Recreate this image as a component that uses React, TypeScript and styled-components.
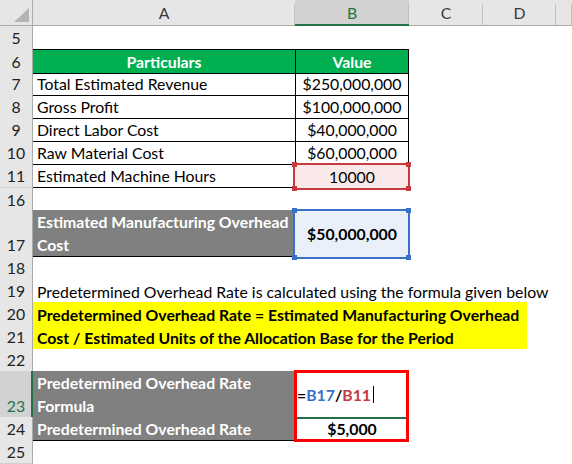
import React from "react";
import styled, { createGlobalStyle } from "styled-components";

const COLS = "33px 262px 114px 74px 73px 16px";
const FONT = `Lato, "Open Sans", "Liberation Sans", sans-serif`;
const FS = "15.8px";

const Global = createGlobalStyle`
  html, body { margin: 0; padding: 0; background: #ffffff; }
  body { font-family: ${FONT}; font-size: ${FS}; color: #000; }
  * { box-sizing: border-box; }
`;

const Sheet = styled.div`
  width: 572px;
  height: 464px;
  overflow: hidden;
  background: #fff;
  display: flex;
  flex-direction: column;
`;

const HeaderBar = styled.div`
  display: grid;
  grid-template-columns: ${COLS};
  height: 26px;
  flex: none;
  background: #e6e6e6;
  border-bottom: 1px solid #ababab;
`;

const Corner = styled.div`
  border-right: 1px solid #ababab;
  display: flex;
  align-items: flex-end;
  justify-content: flex-end;
  padding: 0 3px 3px 0;
`;

const ColHead = styled.div<{ $selected?: boolean }>`
  position: relative;
  display: flex;
  align-items: center;
  justify-content: center;
  font-size: ${FS};
  color: ${(p) => (p.$selected ? "#217346" : "#3a3a3a")};
  background: ${(p) => (p.$selected ? "#d2d2d2" : "transparent")};
  border-bottom: ${(p) => (p.$selected ? "2px solid #217346" : "none")};
  margin-bottom: ${(p) => (p.$selected ? "-1px" : "0")};
  &::after {
    content: "";
    position: absolute;
    right: 0;
    top: 4px;
    bottom: 0;
    width: 1px;
    background: #c2c2c2;
  }
`;

const Row = styled.div<{ $h?: number }>`
  display: grid;
  grid-template-columns: ${COLS};
  height: ${(p) => p.$h ?? 23}px;
  flex: none;
`;

const RowHead = styled.div<{ $active?: boolean; $gapAbove?: boolean }>`
  background: ${(p) => (p.$active ? "#d2d2d2" : "#e6e6e6")};
  color: ${(p) => (p.$active ? "#217346" : "#222")};
  border-right: ${(p) => (p.$active ? "2px solid #217346" : "1px solid #ababab")};
  border-bottom: 1px solid #cfcfcf;
  border-top: ${(p) => (p.$gapAbove ? "1px solid #cfcfcf" : "none")};
  display: flex;
  align-items: flex-end;
  justify-content: center;
  line-height: 23px;
  font-size: ${FS};
  padding-left: ${(p) => (p.$active ? "1px" : "0")};
`;

type CellProps = {
  $fill?: string;
  $bold?: boolean;
  $center?: boolean;
  $middle?: boolean;
  $color?: string;
  $bt?: boolean;
  $bb?: boolean;
  $bx?: boolean;
  $span?: string;
  $width?: number;
};

const Cell = styled.div<CellProps>`
  position: relative;
  grid-column: ${(p) => p.$span ?? "auto"};
  width: ${(p) => (p.$width ? `${p.$width}px` : "auto")};
  background: ${(p) => p.$fill ?? "transparent"};
  color: ${(p) => p.$color ?? "#000"};
  font-weight: ${(p) => (p.$bold ? 700 : 400)};
  border-top: ${(p) => (p.$bt ? "1px solid #000" : "none")};
  border-bottom: ${(p) => (p.$bb ? "1px solid #000" : "none")};
  border-left: ${(p) => (p.$bx ? "1px solid #000" : "none")};
  border-right: ${(p) => (p.$bx ? "1px solid #000" : "none")};
  display: flex;
  flex-direction: column;
  justify-content: ${(p) => (p.$middle ? "center" : "flex-end")};
  align-items: ${(p) => (p.$center ? "center" : "flex-start")};
  padding: 0 4px;
  line-height: 23px;
  white-space: nowrap;
`;

const CellText = styled.span`
  position: relative;
  z-index: 2;
`;

const RefFrame = styled.div<{ $c: string; $bg: string }>`
  position: absolute;
  top: -1px;
  left: -2px;
  right: -1px;
  bottom: -2px;
  border: 2px solid ${(p) => p.$c};
  background: ${(p) => p.$bg};
  z-index: 1;
`;

const Handle = styled.span<{ $c: string; $pos: "tl" | "tr" | "bl" | "br" }>`
  position: absolute;
  width: 5px;
  height: 5px;
  background: ${(p) => p.$c};
  top: ${(p) => (p.$pos[0] === "t" ? "-3px" : "auto")};
  bottom: ${(p) => (p.$pos[0] === "b" ? "-3px" : "auto")};
  left: ${(p) => (p.$pos[1] === "l" ? "-3px" : "auto")};
  right: ${(p) => (p.$pos[1] === "r" ? "-3px" : "auto")};
`;

const RedBox = styled.div`
  position: absolute;
  top: -1px;
  left: -1px;
  width: 115px;
  height: 72px;
  border: 3px solid #ff0000;
  z-index: 4;
  pointer-events: none;
`;

const SelectLine = styled.div`
  position: absolute;
  left: 2px;
  right: 2px;
  bottom: -1px;
  height: 2px;
  background: #217346;
  z-index: 3;
  &::after {
    content: "";
    position: absolute;
    right: -2px;
    top: 0;
    width: 3px;
    height: 3px;
    background: #217346;
  }
`;

const Formula = styled.span`
  position: relative;
  z-index: 2;
  font-weight: 700;
  display: inline-flex;
  align-items: center;
`;

const Ref = styled.span<{ $c: string }>`
  color: ${(p) => p.$c};
`;

const Caret = styled.span`
  display: inline-block;
  width: 1px;
  height: 17px;
  background: #000;
  margin-left: 2px;
`;

const RefCell: React.FC<{ c: string; bg: string; children: React.ReactNode; bold?: boolean }> = ({
  c,
  bg,
  children,
  bold,
}) => (
  <Cell $center $middle $bold={bold}>
    <RefFrame $c={c} $bg={bg}>
      <Handle $c={c} $pos="tl" />
      <Handle $c={c} $pos="tr" />
      <Handle $c={c} $pos="bl" />
      <Handle $c={c} $pos="br" />
    </RefFrame>
    <CellText>{children}</CellText>
  </Cell>
);

const Empty = () => (
  <>
    <Cell />
    <Cell />
    <Cell />
    <Cell />
    <Cell />
  </>
);

const GREEN = "#00b050";
const GRAY = "#808080";

const data: [string, string][] = [
  ["Total Estimated Revenue", "$250,000,000"],
  ["Gross Profit", "$100,000,000"],
  ["Direct Labor Cost", "$40,000,000"],
  ["Raw Material Cost", "$60,000,000"],
];

export default function App() {
  return (
    <Sheet>
      <Global />
      <HeaderBar>
        <Corner>
          <svg width="15" height="14" viewBox="0 0 15 14">
            <polygon points="15,0 15,14 0,14" fill="#b4b4b4" />
          </svg>
        </Corner>
        <ColHead>A</ColHead>
        <ColHead $selected>B</ColHead>
        <ColHead>C</ColHead>
        <ColHead>D</ColHead>
        <ColHead />
      </HeaderBar>

      <Row>
        <RowHead>5</RowHead>
        <Empty />
      </Row>

      <Row>
        <RowHead>6</RowHead>
        <Cell $fill={GREEN} $bt $bb $bold $center $color="#fff">
          Particulars
        </Cell>
        <Cell $fill={GREEN} $bt $bb $bx $bold $center $color="#fff">
          Value
        </Cell>
        <Cell />
        <Cell />
        <Cell />
      </Row>

      {data.map(([label, value], i) => (
        <Row key={label}>
          <RowHead>{7 + i}</RowHead>
          <Cell $bb>{label}</Cell>
          <Cell $bb $bx $center>
            {value}
          </Cell>
          <Cell />
          <Cell />
          <Cell />
        </Row>
      ))}

      <Row>
        <RowHead>11</RowHead>
        <Cell $bb>Estimated Machine Hours</Cell>
        <RefCell c="#c5393f" bg="#f9e9e9">
          10000
        </RefCell>
        <Cell />
        <Cell />
        <Cell />
      </Row>

      <Row>
        <RowHead $gapAbove>16</RowHead>
        <Empty />
      </Row>

      <Row $h={46}>
        <RowHead>17</RowHead>
        <Cell $fill={GRAY} $bb $bold $color="#fff">
          <span>Estimated Manufacturing Overhead</span>
          <span>Cost</span>
        </Cell>
        <RefCell c="#3a70c8" bg="#e9f0fa" bold>
          $50,000,000
        </RefCell>
        <Cell />
        <Cell />
        <Cell />
      </Row>

      <Row>
        <RowHead>18</RowHead>
        <Empty />
      </Row>

      <Row>
        <RowHead>19</RowHead>
        <Cell $span="2 / 7">
          Predetermined Overhead Rate is calculated using the formula given below
        </Cell>
      </Row>

      <Row>
        <RowHead>20</RowHead>
        <Cell $span="2 / 6" $width={494} $fill="#ffff00" $bold>
          Predetermined Overhead Rate = Estimated Manufacturing Overhead
        </Cell>
      </Row>

      <Row>
        <RowHead>21</RowHead>
        <Cell $span="2 / 6" $width={494} $fill="#ffff00" $bold>
          Cost / Estimated Units of the Allocation Base for the Period
        </Cell>
      </Row>

      <Row>
        <RowHead>22</RowHead>
        <Empty />
      </Row>

      <Row $h={46}>
        <RowHead $active>23</RowHead>
        <Cell $fill={GRAY} $bb $bold $color="#fff">
          <span>Predetermined Overhead Rate</span>
          <span>Formula</span>
        </Cell>
        <Cell $middle style={{ paddingLeft: 2 }}>
          <RedBox />
          <SelectLine />
          <Formula>
            =<Ref $c="#3a70c8">B17</Ref>/<Ref $c="#c5393f">B11</Ref>
            <Caret />
          </Formula>
        </Cell>
        <Cell />
        <Cell />
        <Cell />
      </Row>

      <Row>
        <RowHead>24</RowHead>
        <Cell $fill={GRAY} $bb $bold $color="#fff">
          Predetermined Overhead Rate
        </Cell>
        <Cell $bb $bx $center $bold>
          <CellText>$5,000</CellText>
        </Cell>
        <Cell />
        <Cell />
        <Cell />
      </Row>

      <Row $h={24}>
        <RowHead>25</RowHead>
        <Empty />
      </Row>
    </Sheet>
  );
}
